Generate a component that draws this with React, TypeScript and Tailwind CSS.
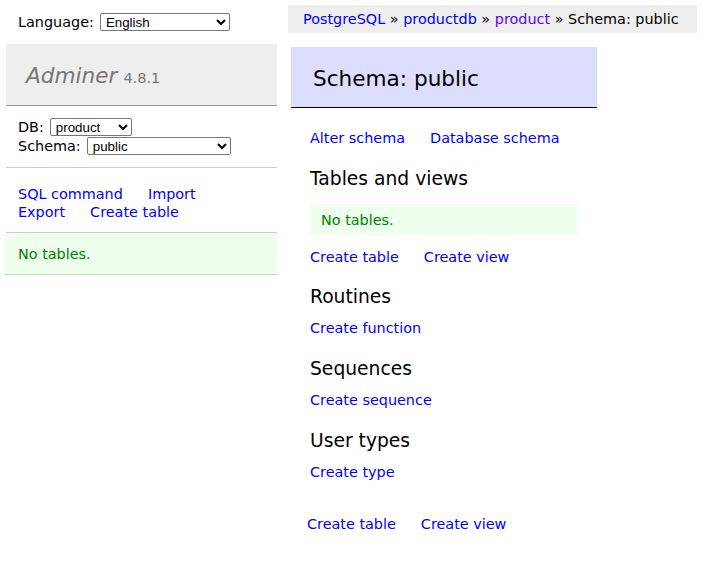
import React from 'react';

const Link = ({ children, className = '' }: { children: React.ReactNode; className?: string }) => (
  <a href="#" className={`text-[#0000ff] no-underline whitespace-nowrap ${className}`}>
    {children}
  </a>
);

const Select = ({ value, options, className }: { value: string; options: string[]; className: string }) => (
  <select
    defaultValue={value}
    className={`h-[18px] border border-[#767676] rounded-[2px] bg-white text-black pl-[1px] font-['Liberation_Sans',Arial,sans-serif] text-[13.33px] leading-none ${className}`}
  >
    {options.map(o => (
      <option key={o}>{o}</option>
    ))}
  </select>
);

const Menu = () => (
  <div className="ml-[6px] w-[271px]">
    {/* Logo */}
    <div className="h-[62px] bg-[#eee] border-b border-[#999] pl-[20px] flex items-center pt-[2px]">
      <span className="italic text-[21.6px] text-[#777]">Adminer</span>
      <span className="ml-[6px] text-[14.5px] text-[#777] mt-[5px]">4.8.1</span>
    </div>

    {/* DB + schema */}
    <div className="pt-[11px] pb-[12px] pl-[12px] border-b border-[#ccc]">
      <div className="h-[19px] flex items-center">
        <span>DB:</span>
        <Select value="product" options={['product']} className="ml-[6px] w-[82px] h-[17px]" />
      </div>
      <div className="h-[19px] flex items-center">
        <span>Schema:</span>
        <Select value="public" options={['public']} className="ml-[6px] w-[144px] h-[17px]" />
      </div>
    </div>

    {/* Links */}
    <div className="pt-[17px] pb-[11px] pl-[12px] border-b border-[#ccc]">
      <div className="h-[18px] flex gap-[25px]">
        <Link>SQL command</Link>
        <Link>Import</Link>
      </div>
      <div className="h-[18px] flex gap-[25px]">
        <Link>Export</Link>
        <Link>Create table</Link>
      </div>
    </div>

    {/* Tables */}
    <div className="-ml-[1px] w-[272px] bg-[#efe] text-[#008000] pt-[12px] pb-[11px] pl-[13px] border-b border-[#ccc]">
      <p className="h-[18px]">No tables.</p>
    </div>
  </div>
);

const Section = ({ title, children, top }: { title: string; children: React.ReactNode; top: string }) => (
  <>
    <h3 className={`text-[18.72px] leading-[24px] h-[24px] ${top}`}>{title}</h3>
    <div className="mt-[10px] h-[18px] flex gap-[25px]">{children}</div>
  </>
);

export default function App() {
  return (
    <div className="flex font-['DejaVu_Sans',Verdana,sans-serif] text-[14.4px] leading-[18px] text-black bg-white min-h-[568px]">
      {/* Left column */}
      <div className="w-[288px] shrink-0">
        <div className="h-[44px] flex items-center pl-[18px]">
          <span>Language:</span>
          <Select value="English" options={['English']} className="ml-[6px] w-[130px]" />
        </div>
        <Menu />
      </div>

      {/* Right column */}
      <div className="flex-1">
        <div className="mt-[5px] w-[409px] h-[28px] bg-[#eee] pl-[15px] leading-[28px] whitespace-nowrap">
          <Link>PostgreSQL</Link> » <Link>productdb</Link> » <Link className="!text-[#5a00ff]">product</Link> » Schema: public
        </div>

        <h2 className="mt-[14px] ml-[3px] w-[306px] h-[61px] bg-[#ddf] border-b border-black pl-[22px] pt-[3px] flex items-center text-[21.6px]">
          Schema: public
        </h2>

        <div className="pl-[22px]">
          <div className="mt-[21px] h-[18px] flex gap-[25px]">
            <Link>Alter schema</Link>
            <Link>Database schema</Link>
          </div>

          <h3 className="mt-[20px] text-[18.72px] leading-[24px] h-[24px]">Tables and views</h3>
          <div className="mt-[13px] w-[267px] h-[31px] bg-[#efe] text-[#008000] pl-[11px] flex items-center">
            No tables.
          </div>
          <div className="mt-[13px] h-[18px] flex gap-[25px]">
            <Link>Create table</Link>
            <Link>Create view</Link>
          </div>

          <Section title="Routines" top="mt-[19px]">
            <Link>Create function</Link>
          </Section>
          <Section title="Sequences" top="mt-[20px]">
            <Link>Create sequence</Link>
          </Section>
          <Section title="User types" top="mt-[20px]">
            <Link>Create type</Link>
          </Section>

          <div className="mt-[34px] -ml-[3px] h-[18px] flex gap-[25px]">
            <Link>Create table</Link>
            <Link>Create view</Link>
          </div>
        </div>
      </div>
    </div>
  );
}
